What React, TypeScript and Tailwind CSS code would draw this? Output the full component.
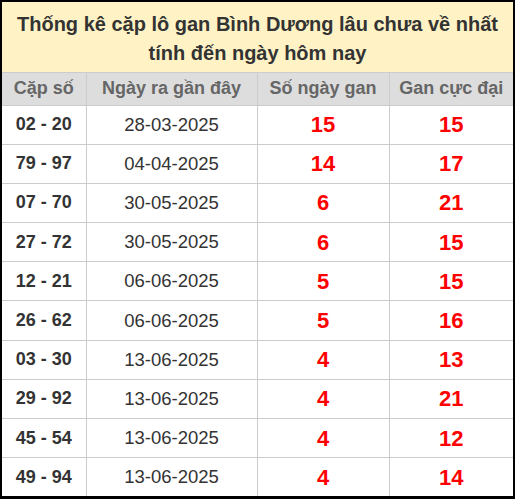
const rows = [
  ["02 - 20", "28-03-2025", "15", "15"],
  ["79 - 97", "04-04-2025", "14", "17"],
  ["07 - 70", "30-05-2025", "6", "21"],
  ["27 - 72", "30-05-2025", "6", "15"],
  ["12 - 21", "06-06-2025", "5", "15"],
  ["26 - 62", "06-06-2025", "5", "16"],
  ["03 - 30", "13-06-2025", "4", "13"],
  ["29 - 92", "13-06-2025", "4", "21"],
  ["45 - 54", "13-06-2025", "4", "12"],
  ["49 - 94", "13-06-2025", "4", "14"],
];

const App = () => {
  return (
    <div className="w-[515px] h-[499px] bg-white border-2 border-b-[3px] border-black font-['Liberation_Sans',Arial,sans-serif] overflow-hidden">
      <table className="w-full border-collapse table-fixed">
        <colgroup>
          <col className="w-[84px]" />
          <col className="w-[171px]" />
          <col className="w-[132px]" />
          <col />
        </colgroup>
        <thead>
          <tr>
            <th
              colSpan={4}
              className="h-[70px] bg-[#fff3c6] text-[#333] text-[20px] leading-[29px] font-bold px-2 pt-[5px]"
            >
              Thống kê cặp lô gan Bình Dương lâu chưa về nhất
              <br />
              tính đến ngày hôm nay
            </th>
          </tr>
          <tr className="bg-[#dddddd] text-[#666] text-[18px] font-bold">
            <th className="h-[33px] border border-[#cccccc] border-l-0 font-bold">Cặp số</th>
            <th className="border border-[#cccccc] font-bold">Ngày ra gần đây</th>
            <th className="border border-[#cccccc] font-bold">Số ngày gan</th>
            <th className="border border-[#cccccc] border-r-0 font-bold">Gan cực đại</th>
          </tr>
        </thead>
        <tbody>
          {rows.map((r, i) => (
            <tr key={i} className="h-[39.2px]">
              <td className="border border-[#cccccc] border-l-0 text-center text-[18px] font-bold text-[#333]">
                {r[0]}
              </td>
              <td className="border border-[#cccccc] text-center text-[18.5px] text-[#333]">{r[1]}</td>
              <td className="border border-[#cccccc] text-center text-[22px] font-bold text-[#ff0000]">
                {r[2]}
              </td>
              <td className="border border-[#cccccc] border-r-0 text-center text-[22px] font-bold text-[#ff0000]">
                {r[3]}
              </td>
            </tr>
          ))}
        </tbody>
      </table>
    </div>
  );
};

export default App;
